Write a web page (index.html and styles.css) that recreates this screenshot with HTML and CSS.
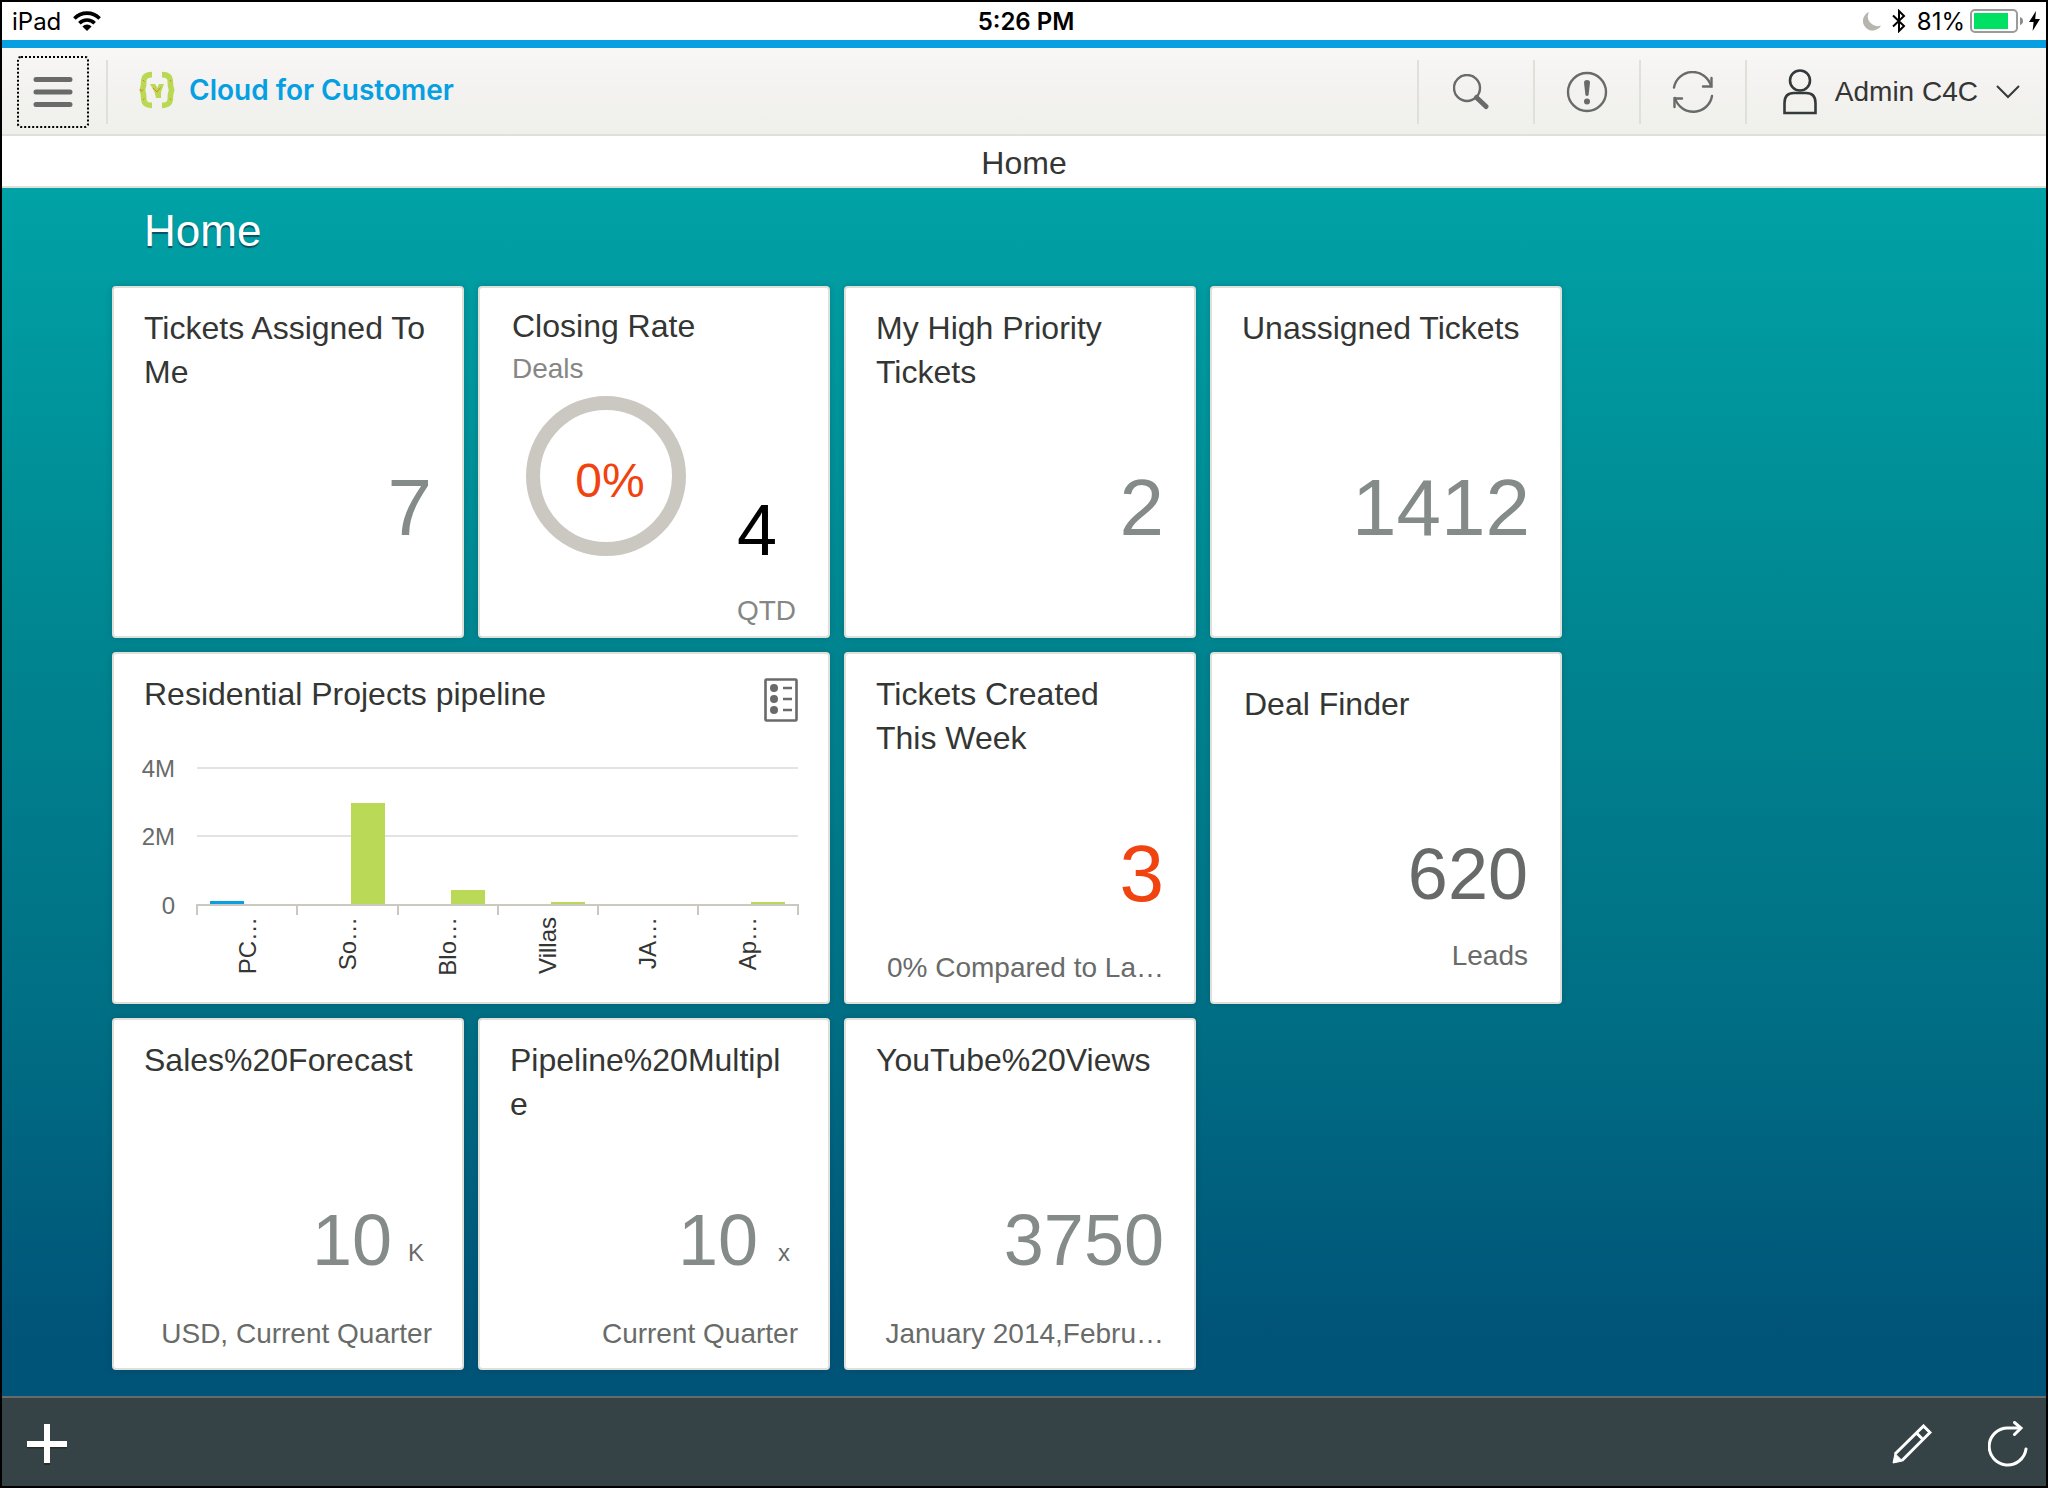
FILE: index.html
```html
<!DOCTYPE html>
<html lang="en">
<head>
    <meta charset="UTF-8">
    <meta name="viewport" content="width=device-width, initial-scale=1.0">
    <title>Cloud for Customer</title>
    <link rel="stylesheet" href="styles.css">
</head>
<body>
    <div class="status">
        <div class="status-left">
            <span>iPad</span>
            <svg width="28" height="20" viewBox="0 0 28 20">
                <path d="M14 20 L9.4 15.4 A6.6 6.6 0 0 1 18.6 15.4 Z"/>
                <path d="M6.4 12.2 A10.8 10.8 0 0 1 21.6 12.2" fill="none" stroke="#000" stroke-width="3.6"/>
                <path d="M1.4 7.4 A17.8 17.8 0 0 1 26.6 7.4" fill="none" stroke="#000" stroke-width="3.6"/>
            </svg>
        </div>
        <div class="status-time">5:26 PM</div>
        <div class="status-right">
            <svg class="moon" width="18" height="19" viewBox="0 0 18 19">
                <path d="M6 0 A9.6 9.6 0 1 0 18 13.4 A9.6 9.6 0 0 1 6 0 Z" fill="#b8b5ae"/>
            </svg>
            <svg class="bluetooth" width="14" height="24" viewBox="0 0 14 24">
                <path d="M1 6.5 L12 17 L7 22 V2 L12 7 L1 17.5" fill="none" stroke="#000" stroke-width="2"/>
            </svg>
            <span>81%</span>
            <svg class="battery" width="54" height="24" viewBox="0 0 54 24">
                <rect x="1" y="1" width="46" height="22" rx="4" fill="#fff" stroke="#9b9b98" stroke-width="2"/>
                <rect x="4" y="4" width="34" height="16" fill="#00e063"/>
                <path d="M50 8 Q53 9 53 12 Q53 15 50 16 Z" fill="#8c8c8a"/>
            </svg>
            <svg width="11" height="20" viewBox="0 0 11 20">
                <path d="M7 0 L0 11 H4.6 L3.6 20 L11 8 H6.2 Z"/>
            </svg>
        </div>
    </div>

    <header class="header">
        <button class="menu" aria-label="Menu">
            <svg width="40" height="32" viewBox="0 0 40 32" stroke="#696b69" stroke-width="5" stroke-linecap="round">
                <path d="M3 3.5 H37 M3 16 H37 M3 28.5 H37"/>
            </svg>
        </button>
        <a class="brand" href="#">
            <svg width="36" height="38" viewBox="0 0 36 38">
                <path d="M13 3.6 Q5.5 3.5 4.8 9 Q5 14.5 3.4 19 Q5 23.5 4.8 29 Q5.5 34.5 13 34.4" fill="none" stroke="#b9d853" stroke-width="5.6"/>
                <path d="M23 3.6 Q30.5 3.5 31.2 9 Q31 14.5 32.6 19 Q31 23.5 31.2 29 Q30.5 34.5 23 34.4" fill="none" stroke="#b9d853" stroke-width="5.6"/>
                <path d="M11 13 H16 L18.5 17 L20 13 H25 L22 21 V27 H17 L15.5 21 Z" fill="#b9d853"/>
                <path d="M1 18 L2.5 20.5 L4 18.5 M14 17 L18 21 L21.5 16.5 M4 9 L5.5 10.5 M4 29 L5.5 27.5 M31 9 L32 10.5 M31 27.5 L32 29" fill="none" stroke="#e8831f"/>
            </svg>
            <span>Cloud for Customer</span>
        </a>
        <div class="tools">
            <button class="tool tool-search" aria-label="Search">
                <svg width="36" height="36" viewBox="0 0 36 36" fill="none" stroke="#696b69">
                    <circle cx="14" cy="14" r="13" stroke-width="2.4"/>
                    <path d="M23.5 23.5 L33 32.5" stroke-width="5" stroke-linecap="round"/>
                </svg>
            </button>
            <button class="tool" aria-label="Notifications">
                <svg width="42" height="42" viewBox="0 0 42 42">
                    <circle cx="21" cy="21" r="19" fill="none" stroke="#696b69" stroke-width="2.4"/>
                    <path d="M18 11.5 Q18 9 21 9 Q24 9 24 11.5 L22.6 24 Q21 26 19.4 24 Z" fill="#696b69"/>
                    <circle cx="21" cy="30.5" r="3" fill="#696b69"/>
                </svg>
            </button>
            <button class="tool" aria-label="Refresh">
                <svg width="42" height="42" viewBox="0 0 42 42" fill="none" stroke="#696b69" stroke-width="2.4" stroke-linecap="round">
                    <path d="M2 16.5 A19 19 0 0 1 39 15"/>
                    <path d="M31 15.5 H39.5 V7"/>
                    <path d="M40 25 A19 19 0 0 1 3 27"/>
                    <path d="M2.5 36 V27.5 H10"/>
                </svg>
            </button>
            <button class="user">
                <svg width="34" height="46" viewBox="0 0 34 46" fill="none" stroke="#343a3a" stroke-width="2.6">
                    <circle cx="17" cy="11.5" r="10"/>
                    <path d="M1.5 44 V34 Q1.5 24 11 24 H23 Q32.5 24 32.5 34 V44 Z"/>
                </svg>
                <span>Admin C4C</span>
                <svg width="24" height="14" viewBox="0 0 24 14" fill="none" stroke="#343a3a" stroke-width="2">
                    <path d="M1 1 L12 12 L23 1"/>
                </svg>
            </button>
        </div>
    </header>

    <div class="page-title">Home</div>

    <main class="main">
        <h1>Home</h1>
        <div class="tiles">
            <section class="tile">
                <h2>Tickets Assigned To Me</h2>
                <div class="value">7</div>
                <div class="foot"></div>
            </section>

            <section class="tile tile-rate">
                <h2>Closing Rate</h2>
                <div class="sub">Deals</div>
                <div class="rate">
                    <div class="ring">0%</div>
                    <div class="deals">
                        <div class="deals-count">4</div>
                        <div class="sub">QTD</div>
                    </div>
                </div>
            </section>

            <section class="tile">
                <h2>My High Priority Tickets</h2>
                <div class="value">2</div>
                <div class="foot"></div>
            </section>

            <section class="tile">
                <h2>Unassigned Tickets</h2>
                <div class="value">1412</div>
                <div class="foot"></div>
            </section>

            <section class="tile tile-wide">
                <div class="tile-head">
                    <h2>Residential Projects pipeline</h2>
                    <button class="legend" aria-label="Legend">
                        <svg width="34" height="44" viewBox="0 0 34 44">
                            <rect x="1.5" y="1.5" width="31" height="41" rx="1" fill="none" stroke="#696b69" stroke-width="2.6"/>
                            <g fill="#696b69">
                                <circle cx="10" cy="10" r="4"/>
                                <circle cx="10" cy="21" r="4"/>
                                <circle cx="10" cy="32" r="4"/>
                            </g>
                            <path d="M19 10 H28 M19 21 H28 M19 32 H28" stroke="#696b69" stroke-width="2.6"/>
                        </svg>
                    </button>
                </div>
                <svg class="chart" viewBox="4 0 654 230">
                    <g stroke="#e3e3df" stroke-width="2">
                        <path d="M57 18 H658 M57 86 H658"/>
                    </g>
                    <rect x="70" y="151" width="34" height="3" fill="#0a9fe0"/>
                    <g fill="#bad957">
                        <rect x="211" y="53" width="34" height="101"/>
                        <rect x="311" y="140" width="34" height="14"/>
                        <rect x="411" y="152" width="34" height="2"/>
                        <rect x="611" y="152" width="34" height="2"/>
                    </g>
                    <path d="M56 155 H659 M57 155 V165 M157 155 V165 M258 155 V165 M358 155 V165 M458 155 V165 M558 155 V165 M658 155 V165" fill="none" stroke="#cbc8c1" stroke-width="2"/>
                    <g class="y-axis">
                        <text x="35" y="27">4M</text>
                        <text x="35" y="95">2M</text>
                        <text x="35" y="164">0</text>
                    </g>
                    <g class="x-axis">
                        <text transform="translate(116 167) rotate(-90)">PC…</text>
                        <text transform="translate(216 167) rotate(-90)">So…</text>
                        <text transform="translate(316 167) rotate(-90)">Blo…</text>
                        <text transform="translate(416 167) rotate(-90)">Villas</text>
                        <text transform="translate(516 167) rotate(-90)">JA…</text>
                        <text transform="translate(616 167) rotate(-90)">Ap…</text>
                    </g>
                </svg>
            </section>

            <section class="tile">
                <h2>Tickets Created This Week</h2>
                <div class="value red">3</div>
                <div class="foot">0% Compared to La…</div>
            </section>

            <section class="tile tile-finder">
                <h2>Deal Finder</h2>
                <div class="value small dark">620</div>
                <div class="foot">Leads</div>
            </section>

            <section class="tile">
                <h2>Sales%20Forecast</h2>
                <div class="value small">10<span class="unit">K</span></div>
                <div class="foot">USD, Current Quarter</div>
            </section>

            <section class="tile">
                <h2>Pipeline%20Multiple</h2>
                <div class="value small">10<span class="unit">x</span></div>
                <div class="foot">Current Quarter</div>
            </section>

            <section class="tile">
                <h2>YouTube%20Views</h2>
                <div class="value small">3750</div>
                <div class="foot">January 2014,Febru…</div>
            </section>
        </div>
    </main>

    <footer class="footer">
        <button aria-label="Add">
            <svg width="40" height="42" viewBox="0 0 40 42" stroke-width="6">
                <path d="M0 22.5 H40 M20 2.5 V42" stroke="#2b2b26"/>
                <path d="M0 21 H40 M20 1 V40" stroke="#fff"/>
            </svg>
        </button>
        <div class="footer-right">
            <button aria-label="Edit">
                <svg width="40" height="40" viewBox="0 0 40 40" fill="none" stroke="#fff" stroke-width="3">
                    <path d="M3 30 L31.5 2 L38 8.5 L10 36.5 M24.5 9 L31 15.5"/>
                    <path d="M1 39 L3 29.5 L10.5 37 Z" fill="#fff" stroke-width="1"/>
                </svg>
            </button>
            <button aria-label="Reload">
                <svg width="40" height="46" viewBox="0 0 40 46" fill="none" stroke="#fff" stroke-width="3" stroke-linecap="round">
                    <path d="M38 28 A18.5 18.5 0 1 1 20 7 H32"/>
                    <path d="M26.5 1.5 L33 7 L26.5 13.5"/>
                </svg>
            </button>
        </div>
    </footer>
</body>
</html>
```
FILE: styles.css
```css
* {
    box-sizing: border-box;
}
body {
    margin: 0;
    min-height: 100vh;
    display: flex;
    flex-direction: column;
    border: 2px solid #000;
    background-color: #fff;
    font-family: "Liberation Sans", Arial, sans-serif;
    color: #343634;
}
h1, h2 {
    margin: 0;
    font-weight: normal;
}
button {
    display: flex;
    align-items: center;
    justify-content: center;
    padding: 0;
    border: none;
    background: none;
    font-family: inherit;
    color: inherit;
}
svg {
    display: block;
    flex-shrink: 0;
}

/* status bar */
.status {
    display: grid;
    grid-template-columns: 1fr auto 1fr;
    align-items: center;
    height: 38px;
    padding: 0 6px 0 10px;
    font-family: Inter, sans-serif;
    font-size: 24px;
    color: #000;
}
.status-left,
.status-right {
    display: flex;
    align-items: center;
}
.status-left {
    gap: 12px;
}
.status-right {
    justify-content: flex-end;
    gap: 5px;
}
.status-time {
    font-weight: 600;
}
.moon,
.bluetooth {
    margin-right: 6px;
}

/* header */
.header {
    display: flex;
    align-items: center;
    height: 96px;
    padding-top: 2px;
    padding-left: 15px;
    border-top: 8px solid #059fe2;
    border-bottom: 2px solid #dfe0da;
    background: linear-gradient(#f8f7f6, #f3f2f0 50%, #eff0eb);
}
.menu {
    width: 72px;
    height: 72px;
    border: 2px dotted #000;
    border-radius: 4px;
}
.brand {
    display: flex;
    align-items: center;
    gap: 14px;
    height: 64px;
    margin-left: 17px;
    padding: 0 0 4px 31px;
    border-left: 2px solid #dfe0da;
    font-family: Inter, sans-serif;
    font-size: 28px;
    font-weight: 600;
    color: #059fe2;
    text-decoration: none;
}
.tools {
    display: flex;
    margin-left: auto;
}
.tool {
    width: 106px;
    height: 64px;
    border-left: 2px solid #dfe0da;
}
.tool-search {
    width: 116px;
    padding-right: 10px;
}
.user {
    gap: 18px;
    height: 64px;
    padding: 0 26px 0 36px;
    border-left: 2px solid #dfe0da;
    font-size: 28px;
}
.page-title {
    height: 52px;
    border-bottom: 2px solid #dfe0da;
    font-size: 32px;
    line-height: 54px;
    text-align: center;
}

/* tiles */
.main {
    flex: 1;
    padding: 14px 110px 26px;
    background: linear-gradient(#00a2a6, #008590 38%, #006f85 68%, #005478 95%);
}
h1 {
    margin-bottom: 26px;
    padding-left: 32px;
    font-size: 44px;
    line-height: 58px;
    color: #fff;
    text-shadow: 0 2px 1px #0b4f66;
}
.tiles {
    display: grid;
    grid-template-columns: repeat(auto-fill, 352px);
    gap: 14px;
    max-width: 1450px;
}
.tile {
    display: flex;
    flex-direction: column;
    height: 352px;
    padding: 18px 30px;
    border: 2px solid #dfe0da;
    border-radius: 4px;
    background-color: #fff;
    box-shadow: 0 0 6px rgba(0, 40, 60, 0.2);
}
h2 {
    font-size: 32px;
    line-height: 44px;
    overflow-wrap: anywhere;
}
.value {
    margin-top: auto;
    margin-bottom: 38px;
    font-size: 80px;
    line-height: 80px;
    color: #848b88;
    text-align: right;
}
.small {
    font-size: 72px;
}
.red {
    color: #f0430f;
}
.dark {
    color: #686a69;
}
.unit {
    display: inline-block;
    width: 32px;
    margin-right: 8px;
    font-size: 24px;
    line-height: 24px;
    vertical-align: 4px;
    color: #696b69;
}
.foot {
    height: 32px;
    font-size: 28px;
    line-height: 32px;
    color: #696b69;
    text-align: right;
    white-space: nowrap;
}

.tile-finder {
    padding: 28px 32px 30px;
}
.tile-finder .value {
    margin-bottom: 26px;
}

.tile-rate {
    padding: 16px 32px 4px;
}
.sub {
    font-size: 28px;
    line-height: 42px;
    color: #858785;
}
.rate {
    display: flex;
    flex: 1;
    justify-content: space-between;
    padding: 6px 0 0 14px;
}
.ring {
    display: flex;
    align-items: center;
    justify-content: center;
    width: 160px;
    height: 160px;
    padding: 8px 0 0 8px;
    border: 14px solid #cbc8c1;
    border-radius: 50%;
    font-size: 48px;
    color: #f0430f;
}
.deals {
    display: flex;
    flex-direction: column;
    justify-content: flex-end;
    gap: 20px;
}
.deals-count {
    font-size: 72px;
    line-height: 80px;
    color: #000;
}

.tile-wide {
    grid-column: span 2;
}
.tile-head {
    display: flex;
    justify-content: space-between;
    align-items: flex-start;
}
.legend {
    padding-top: 6px;
}
.chart {
    width: 100%;
    margin-top: 28px;
    font-size: 24px;
    overflow: visible;
}
.chart text {
    text-anchor: end;
}
.y-axis {
    fill: #696b69;
}
.x-axis {
    fill: #343634;
}

/* bottom bar */
.footer {
    display: flex;
    justify-content: space-between;
    align-items: center;
    height: 90px;
    padding: 4px 18px 0 25px;
    border-top: 2px solid #686c68;
    background-color: #354346;
}
.footer-right {
    display: flex;
    align-items: center;
    gap: 56px;
}
```
